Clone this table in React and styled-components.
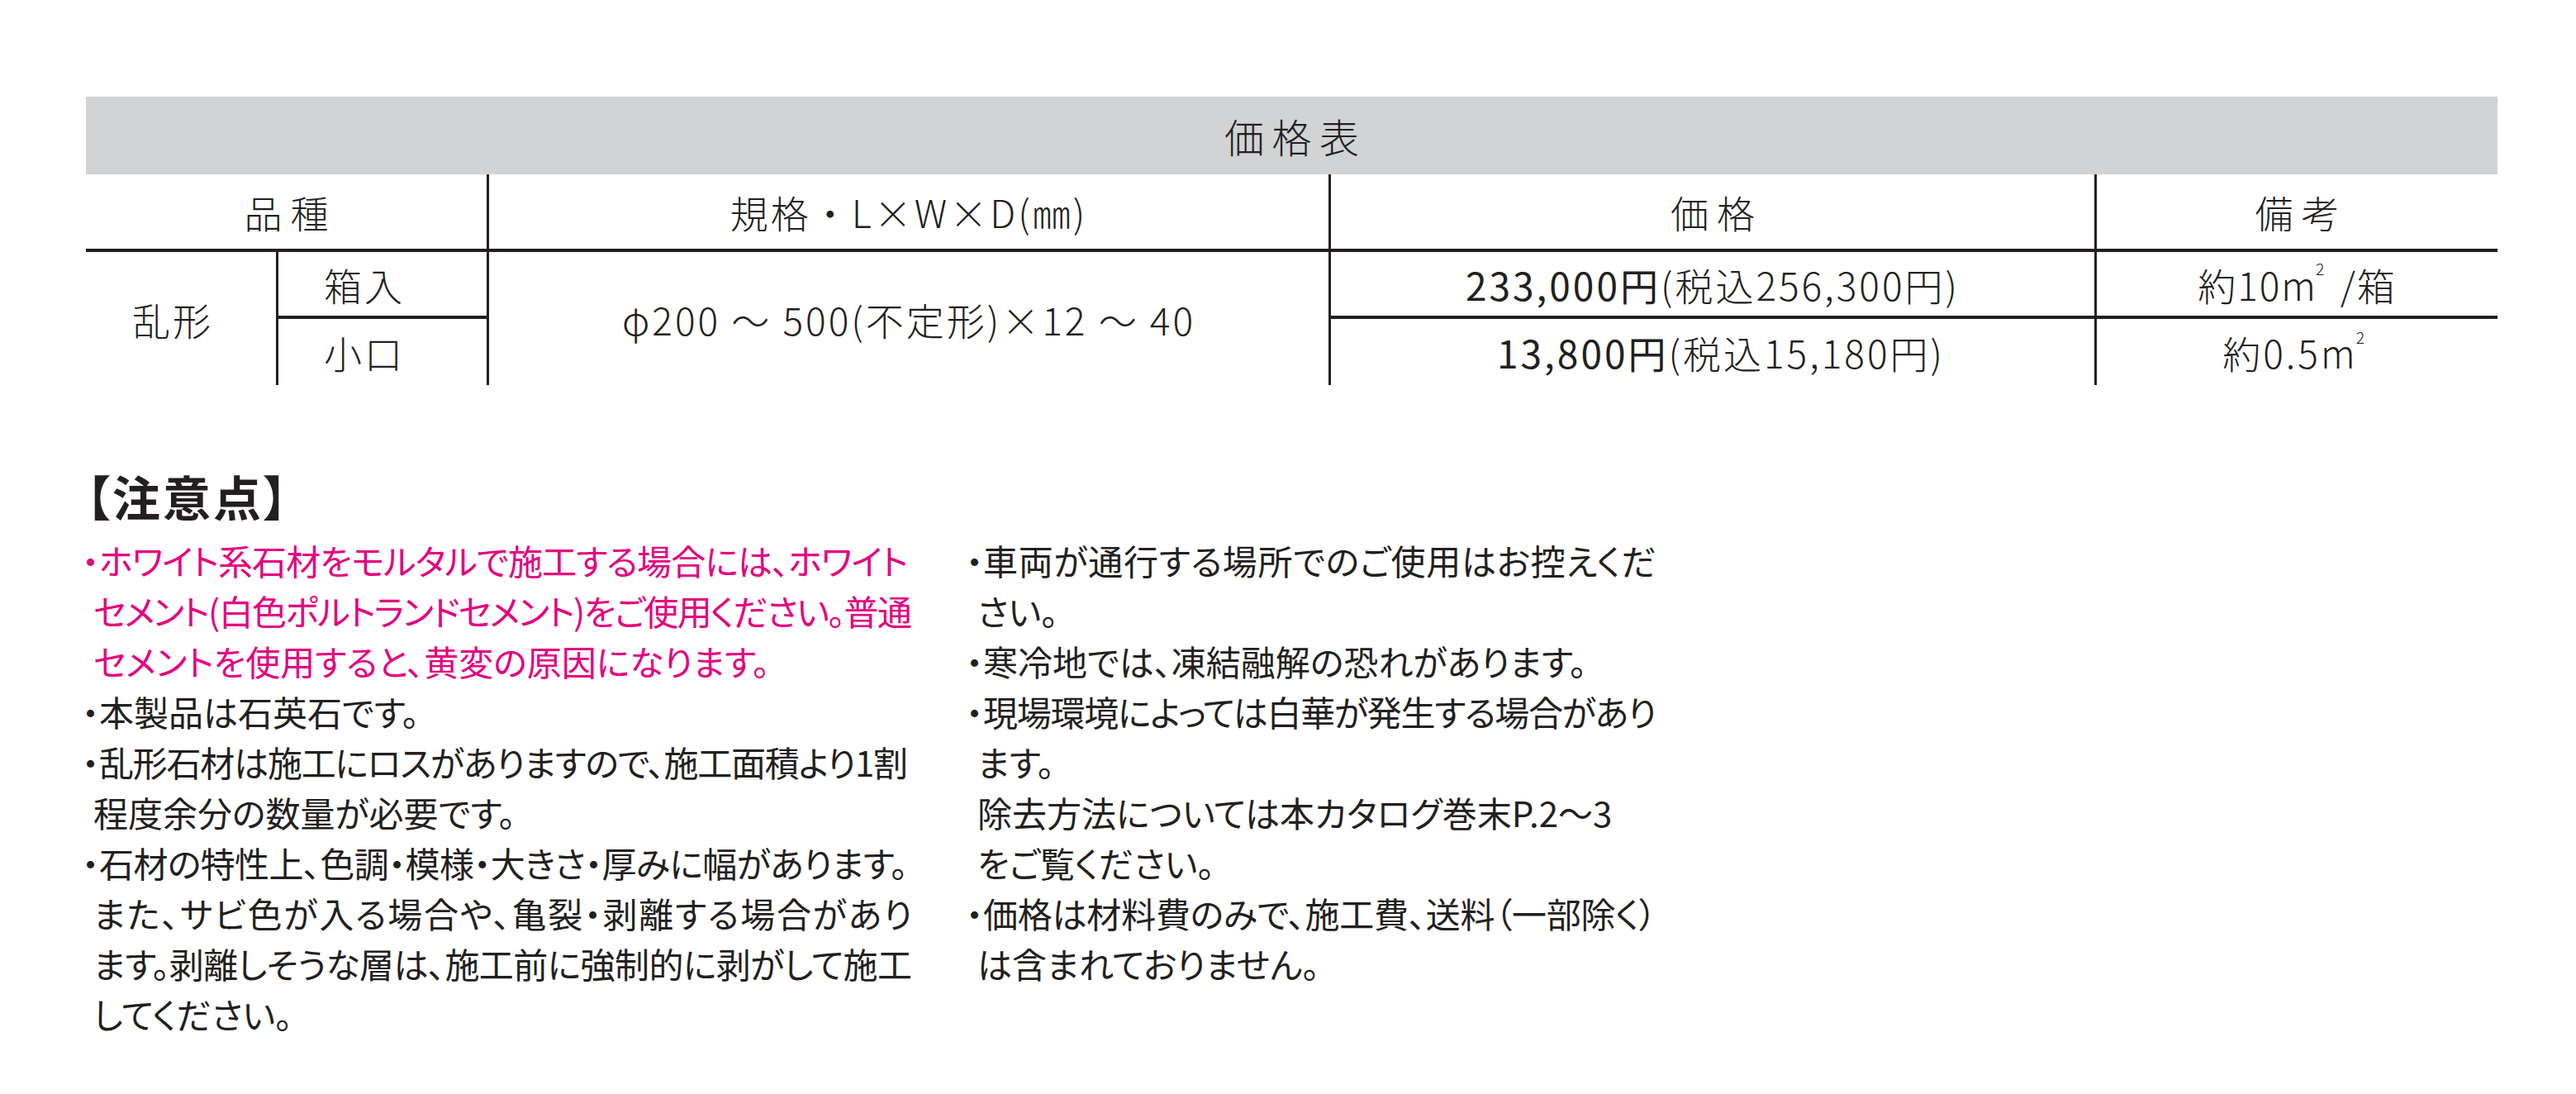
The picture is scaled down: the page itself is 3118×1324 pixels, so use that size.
import React, { useLayoutEffect, useRef, useState } from "react";
import styled, { createGlobalStyle } from "styled-components";

const GlobalStyle = createGlobalStyle`
  html, body {
    margin: 0;
    padding: 0;
    background: #ffffff;
  }
  body {
    font-family: "Noto Sans CJK JP", "Noto Sans", sans-serif;
    color: #231f20;
  }
`;

const INK = "#231f20";
const PINK = "#e4007f";

const Page = styled.div`
  width: 3118px;
  height: 1324px;
  box-sizing: border-box;
  padding: 117px 0 0 104px;
`;

const Table = styled.div`
  display: grid;
  grid-template-columns: 233px 255px 1019px 927px 485px;
  grid-template-rows: 94px 90px 81px 84px;
  width: 2919px;
`;

const Caption = styled.div`
  grid-column: 1 / -1;
  background: #d1d3d4;
  display: flex;
  align-items: center;
  justify-content: center;
  font-size: 48px;
  font-weight: 300;
  letter-spacing: 0.2em;
  padding-left: 0.2em;
`;

const Cell = styled.div`
  box-sizing: border-box;
  display: flex;
  align-items: center;
  justify-content: center;
  grid-column: ${({ $col }) => $col};
  grid-row: ${({ $row }) => $row};
  border-right: ${({ $last }) => ($last ? "none" : `3px solid ${INK}`)};
  border-top: ${({ $head }) => ($head ? "none" : `4px solid ${INK}`)};
  padding-right: ${({ $shift }) => $shift || 0}px;
  padding-left: ${({ $push }) => $push || 0}px;
  font-size: 46px;
  font-weight: 300;
  letter-spacing: ${({ $spread }) => $spread ?? 3}px;
  white-space: nowrap;
`;

const Price = styled.span`
  font-weight: 400;
`;

const Sup = styled.span`
  font-size: 0.42em;
  position: relative;
  top: -0.95em;
  margin-left: -0.1em;
  margin-right: ${({ $gap }) => $gap ?? 0.3}em;
`;

const Notes = styled.section`
  margin-top: 99px;
`;

const NotesTitle = styled.h2`
  margin: 0;
  font-size: 58px;
  font-weight: 700;
  line-height: 70px;
  letter-spacing: 3px;
  font-feature-settings: "palt";
`;

const Columns = styled.div`
  display: flex;
  gap: 70px;
  margin-top: 12px;
`;

const Column = styled.div`
  width: ${({ $width }) => $width}px;
  font-size: 42px;
  line-height: 61px;
  font-feature-settings: "palt";
`;

const Line = styled.div`
  color: ${({ $pink }) => ($pink ? PINK : INK)};
  padding-left: ${({ $indent }) => ($indent ? "9px" : "0")};
  white-space: nowrap;
`;

const LineText = styled.span`
  display: inline-block;
`;

const Bullet = styled.span`
  margin-left: -5px;
  letter-spacing: 0;
`;

const leftNotes = [
  { pink: true, bullet: true, text: "ホワイト系石材をモルタルで施工する場合には、ホワイト", full: true },
  { pink: true, indent: true, text: "セメント(白色ポルトランドセメント)をご使用ください。普通", full: true },
  { pink: true, indent: true, text: "セメントを使用すると、黄変の原因になります。" },
  { bullet: true, text: "本製品は石英石です。" },
  { bullet: true, text: "乱形石材は施工にロスがありますので、施工面積より1割", full: true },
  { indent: true, text: "程度余分の数量が必要です。" },
  { bullet: true, text: "石材の特性上、色調・模様・大きさ・厚みに幅があります。", full: true },
  { indent: true, text: "また、サビ色が入る場合や、亀裂・剥離する場合があり", full: true },
  { indent: true, text: "ます。剥離しそうな層は、施工前に強制的に剥がして施工", full: true },
  { indent: true, text: "してください。" },
];

const rightNotes = [
  { bullet: true, text: "車両が通行する場所でのご使用はお控えくだ", full: true },
  { indent: true, text: "さい。" },
  { bullet: true, text: "寒冷地では、凍結融解の恐れがあります。" },
  { bullet: true, text: "現場環境によっては白華が発生する場合があり", full: true },
  { indent: true, text: "ます。" },
  { indent: true, text: "除去方法については本カタログ巻末P.2～3" },
  { indent: true, text: "をご覧ください。" },
  { bullet: true, text: "価格は材料費のみで、施工費、送料（一部除く）", full: true },
  { indent: true, text: "は含まれておりません。" },
];

// full lines are stretched (or squeezed) so they end flush with the column edge
const NoteLine = ({ pink, indent, bullet, full, text }) => {
  const ref = useRef(null);
  const [spacing, setSpacing] = useState(null);

  useLayoutEffect(() => {
    if (!full || !ref.current) return;
    const el = ref.current;
    const parent = el.parentElement;
    const avail = parent.clientWidth - parseFloat(getComputedStyle(parent).paddingLeft);
    const natural = el.getBoundingClientRect().width - (bullet ? -5 : 0);
    const gaps = Math.max([...text].length - 1, 1);
    setSpacing((avail - natural) / gaps);
  }, [full, text, bullet]);

  return (
    <Line $pink={pink} $indent={indent}>
      <LineText ref={ref} style={spacing !== null ? { letterSpacing: `${spacing}px` } : undefined}>
        {bullet && <Bullet>・</Bullet>}
        {text}
      </LineText>
    </Line>
  );
};

const NoteColumn = ({ width, lines }) => (
  <Column $width={width}>
    {lines.map((l, i) => (
      <NoteLine key={i} {...l} />
    ))}
  </Column>
);

const App = () => (
  <>
    <GlobalStyle />
    <Page>
      <Table>
        <Caption>価格表</Caption>

        <Cell $head $spread={0} $col="1 / 3" $row="2">品 種</Cell>
        <Cell $head $col="3" $row="2">規格・L×W×D(㎜)</Cell>
        <Cell $head $spread={0} $col="4" $row="2">価 格</Cell>
        <Cell $head $spread={0} $last $col="5" $row="2">備 考</Cell>

        <Cell $col="1" $row="3 / 5" $shift={20}>乱形</Cell>
        <Cell $col="2" $row="3" $shift={44}>箱入</Cell>
        <Cell $col="3" $row="3 / 5">φ200 ～ 500(不定形)×12 ～ 40</Cell>
        <Cell $col="4" $row="3">
          <Price>233,000円</Price>(税込256,300円)
        </Cell>
        <Cell $last $spread={2} $col="5" $row="3">
          約10m<Sup $gap={0.9}>2</Sup>/箱
        </Cell>

        <Cell $col="2" $row="4" $shift={44}>小口</Cell>
        <Cell $col="4" $row="4" $push={20}>
          <Price>13,800円</Price>(税込15,180円)
        </Cell>
        <Cell $last $col="5" $row="4">
          約0.5m<Sup>2</Sup>
        </Cell>
      </Table>

      <Notes>
        <NotesTitle>【注意点】</NotesTitle>
        <Columns>
          <NoteColumn width={1000} lines={leftNotes} />
          <NoteColumn width={836} lines={rightNotes} />
        </Columns>
      </Notes>
    </Page>
  </>
);

export default App;
